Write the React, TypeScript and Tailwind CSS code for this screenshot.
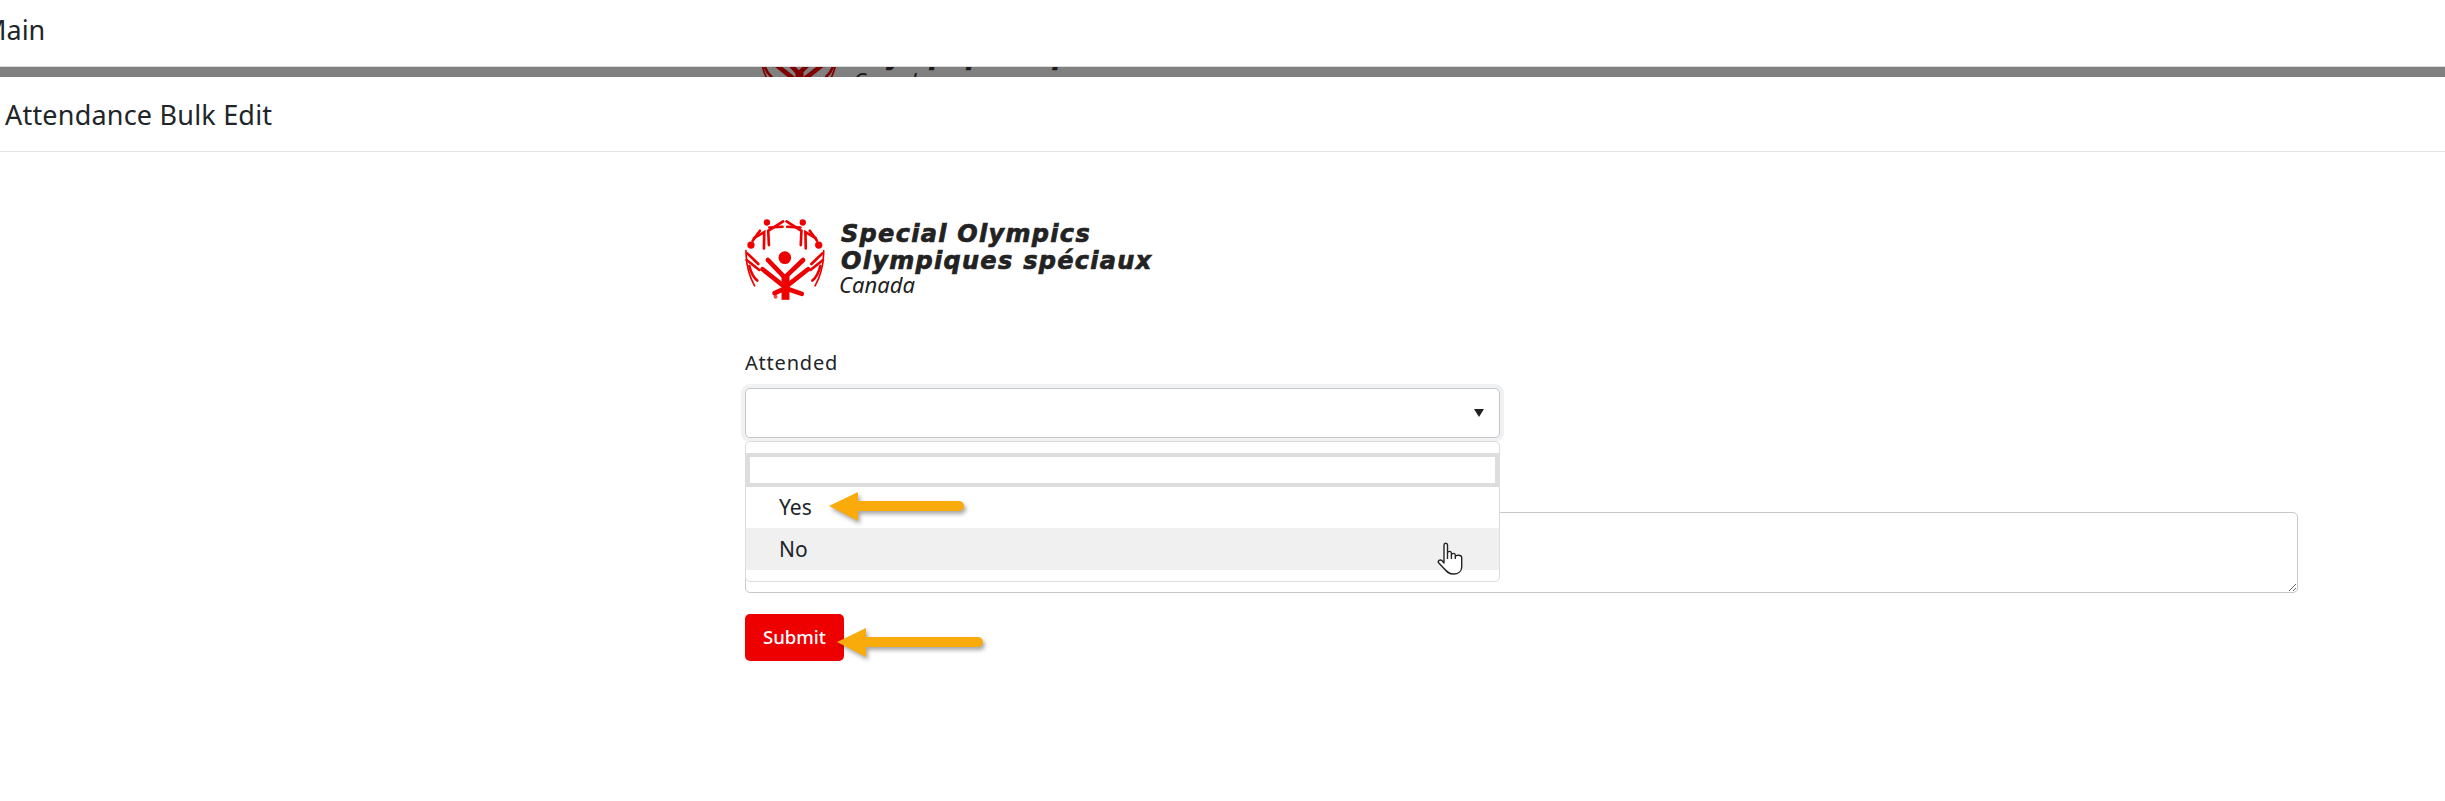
const Logo = ({ color }: { color: string }) => (
  <svg width={83} height={85} viewBox="15 15 250 255" fill="none" stroke={color} strokeLinecap="round" className="block shrink-0">
    <circle cx="135" cy="143" r="19" fill={color} stroke="none" />
    <g strokeWidth="14">
      <path d="M130 198 L84 150" />
      <path d="M140 198 L190 150" />
      <path d="M126 224 L68 178" />
      <path d="M146 224 L205 178" />
      <path d="M126 240 L104 250" />
      <path d="M146 238 L186 252" />
    </g>
    <path d="M125 195 H149 V270 H125 Z" fill={color} stroke="none" />
    {[0, 1].map((m) => (
      <g key={m} transform={m ? "translate(270 0) scale(-1 1)" : undefined}>
        <circle cx="81" cy="37" r="9.5" fill={color} stroke="none" />
        <circle cx="33" cy="105" r="11" fill={color} stroke="none" />
        <g strokeWidth="8">
          <path d="M72 115 L73 66 L42 84" />
          <path d="M87 105 L85 62 L130 34" />
          <path d="M88 52 L128 50" />
          <path d="M60 62 L38 92" />
          <path d="M22 130 L55 162" />
          <path d="M20 150 L58 180" />
          <path d="M18 122 C18 160 28 200 44 228" strokeWidth="5" />
          <path d="M28 168 C32 185 38 200 52 212" />
        </g>
      </g>
    ))}
    <circle cx="107" cy="261" r="6" fill={color} stroke="none" opacity="0.7" />
  </svg>
);

const LogoText = ({ color }: { color: string }) => (
  <div className="ml-[13px] flex flex-col" style={{ color }}>
    <span className="mt-[6px] whitespace-nowrap font-['DejaVu_Sans',sans-serif] text-[24px] font-bold italic leading-[27px] tracking-[1.3px] [-webkit-text-stroke:0.7px_currentColor]">Special Olympics</span>
    <span className="whitespace-nowrap font-['DejaVu_Sans',sans-serif] text-[24px] font-bold italic leading-[27px] tracking-[1.3px] [-webkit-text-stroke:0.7px_currentColor]">Olympiques spéciaux</span>
    <span className="mt-[-4px] ml-[-2px] whitespace-nowrap text-[22px] italic leading-[26px]">Canada</span>
  </div>
);

const LogoRow = ({ color, text }: { color: string; text: string }) => (
  <div className="flex items-start">
    <Logo color={color} />
    <LogoText color={text} />
  </div>
);

const Arrow = ({ className, length }: { className: string; length: number }) => (
  <svg className={className} width={length + 12} height={40} viewBox={`0 0 ${length + 12} 40`}>
    <g fill="#f9ab0c" style={{ filter: "drop-shadow(2px 3px 2px rgba(0,0,0,0.35))" }}>
      <path d="M2 15 L31 1 L31 30 Z" />
      <rect x="26" y="10" width={length - 26} height="10" rx="5" />
    </g>
  </svg>
);

const Hand = () => (
  <svg className="absolute left-[691px] top-[100px]" width="26" height="33" viewBox="0 0 26 33" fill="#fff" stroke="#222" strokeWidth="1.4" strokeLinejoin="round">
    <path d="M7 21 V3 C7 0.6 10.5 0.6 10.5 3 V11 C11 8.8 14 8.8 14.4 11 V13 C15 10.8 18 10.8 18.3 13 V14.5 C19 12.8 24.5 12.6 24.7 15.5 V25 C24.7 29.5 21 32 16.5 32 C12 32 10 30 7 26.5 L1.6 20.8 C0.4 19 3 17 5 18.6 Z" />
    <path d="M14.4 13 V17 M18.3 14.5 V17 M10.5 11 V17" fill="none" />
  </svg>
);

export default function App() {
  return (
    <div className="h-[801px] overflow-hidden bg-white font-['Noto_Sans',sans-serif] text-[#212529]">
      <div className="flex h-[67px] items-center overflow-hidden border-b border-[#dddddd]">
        <span className="ml-[-18px] mt-[-8px] text-[27px] leading-none">Main</span>
      </div>
      <div className="relative h-[10px] overflow-hidden bg-[#808080]">
        <div className="absolute left-[759px] top-[-56px]">
          <LogoRow color="#7f0000" text="#1a1a1a" />
        </div>
      </div>
      <div className="flex h-[75px] items-center border-b border-[#e5e5e5] pl-[5px]">
        <span className="text-[27px] leading-none tracking-[0.2px]">Attendance Bulk Edit</span>
      </div>

      <div className="ml-[745px] w-[1553px] pt-[63px]">
        <LogoRow color="#ee0000" text="#222222" />

        <label className="mt-[50px] block text-[20px] leading-[26px] tracking-[0.8px]">Attended</label>

        <div className="relative mt-[12px]">
          <button className="flex h-[50px] w-[755px] items-center justify-end rounded-[5px] border border-[#c6c6c9] bg-white pr-[15px] shadow-[0_0_0_4px_#f0f1f3]">
            <svg width="10" height="8" viewBox="0 0 10 8">
              <path d="M0 0 H10 L5 8 Z" fill="#222" />
            </svg>
          </button>

          <div className="absolute left-0 top-[53px] z-10 h-[141px] w-[755px] rounded-[5px] border border-[#dddddd] bg-white">
            <div className="h-[11px]" />
            <input className="box-border block h-[34px] w-full border-[4px] border-[#dddddd] bg-white outline-none" />
            <div className="flex h-[41px] items-center pl-[33px] pt-[1px] text-[21px]">Yes</div>
            <div className="flex h-[42px] items-center bg-[#f0f0f0] pl-[33px] pt-[2px] text-[21px]">No</div>
            <Hand />
          </div>
          <Arrow className="absolute left-[82px] top-[103px] z-20" length={137} />
        </div>

        <textarea className="mt-[74px] block h-[81px] w-[1553px] rounded-[5px] border border-[#c8c8c8] bg-white outline-none" />

        <div className="relative mt-[21px]">
          <button className="h-[47px] w-[99px] rounded-[5px] bg-[#ee0000] pb-[2px] text-[18.5px] font-medium text-white">Submit</button>
          <Arrow className="absolute left-[90px] top-[13px] z-20" length={148} />
        </div>
      </div>
    </div>
  );
}
